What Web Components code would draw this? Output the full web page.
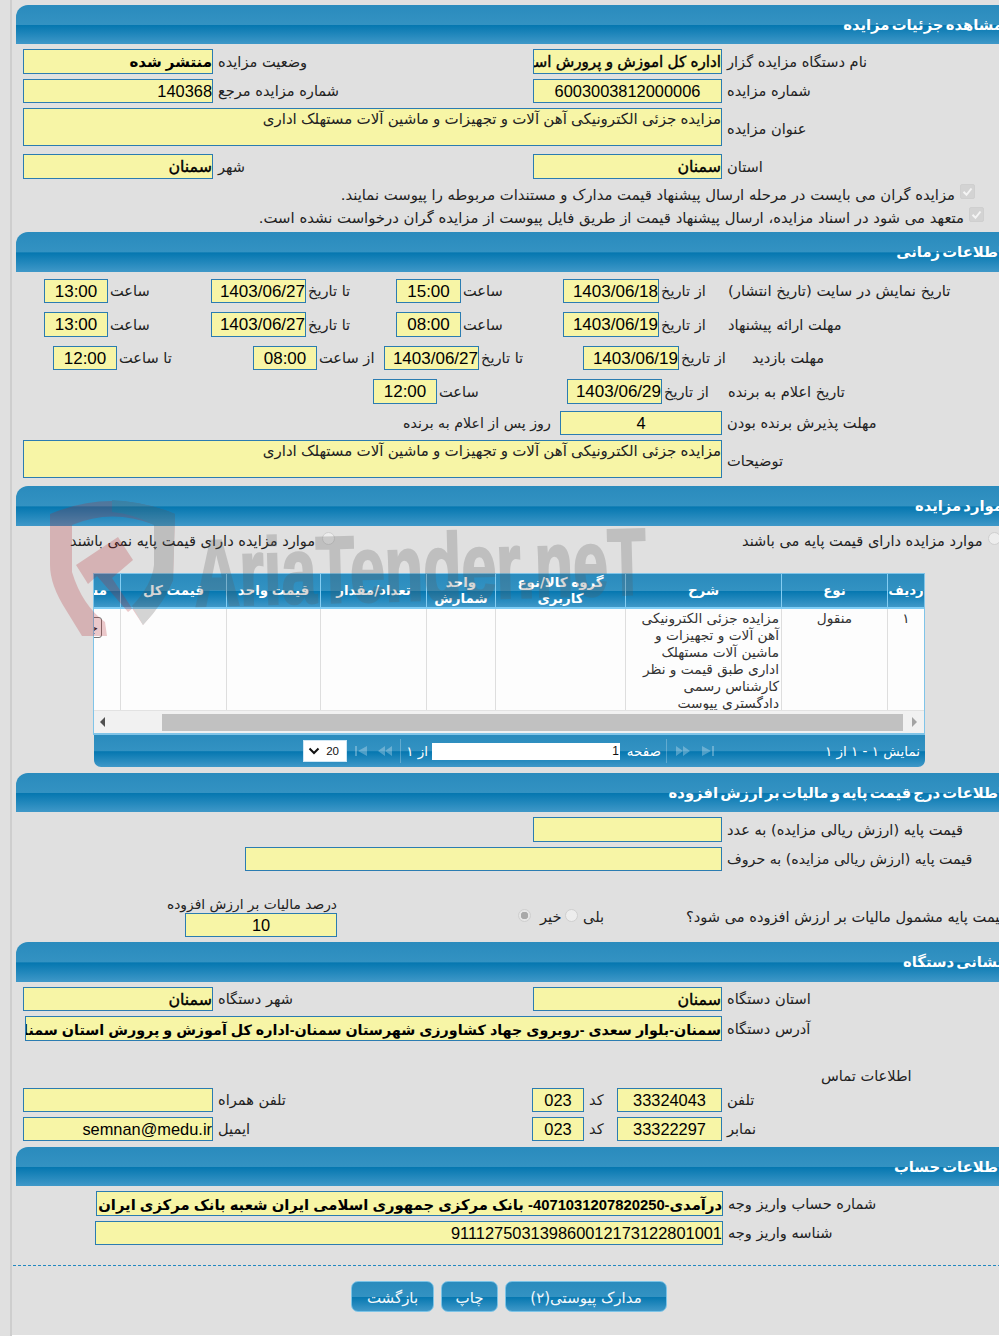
<!DOCTYPE html>
<html>
<head>
<meta charset="utf-8">
<title>مشاهده جزئیات مزایده</title>
<style>
html,body{margin:0;padding:0;height:1336px;overflow:hidden;background:#e0e0e0}
body{font:14px "Liberation Sans","DejaVu Sans",sans-serif;color:#111}
</style>
</head>
<body>
<tender-page>
  <f-section title="مشاهده جزئیات مزایده" style="margin-top:5px;--hh:39px">
    <f-row h="25" mt="5" pad="7">
      <f-field w="190" bold style="font-size:15px;line-height:23px">منتشر شده</f-field><f-label w="320">وضعیت مزایده</f-label>
      <f-field w="189" faux style="font-size:15.2px">اداره کل اموزش و پرورش استان سمنان</f-field><f-label>نام دستگاه مزایده گزار</f-label>
    </f-row>
    <f-row h="24" mt="5" pad="7">
      <f-field w="190">140368</f-field><f-label w="320">شماره مزایده مرجع</f-label>
      <f-field w="189" center>6003003812000006</f-field><f-label>شماره مزایده</f-label>
    </f-row>
    <f-row h="38" mt="5" pad="7">
      <f-field w="699" area>مزایده جزئی الکترونیکی آهن آلات و تجهیزات و ماشین آلات مستهلک اداری</f-field><f-label style="margin-top:4px">عنوان مزایده</f-label>
    </f-row>
    <f-row h="25" mt="8" pad="7">
      <f-field w="190" faux>سمنان</f-field><f-label w="320">شهر</f-label>
      <f-field w="189" faux>سمنان</f-field><f-label>استان</f-label>
    </f-row>
    <f-row h="22" mt="5" end="41">
      <f-label style="font-size:14.8px">مزایده گران می بایست در مرحله ارسال پیشنهاد قیمت مدارک و مستندات مربوطه را پیوست نمایند.</f-label><f-check></f-check>
    </f-row>
    <f-row h="22" mt="1" end="32">
      <f-label style="font-size:14.85px">متعهد می شود در اسناد مزایده، ارسال پیشنهاد قیمت از طریق فایل پیوست از مزایده گران درخواست نشده است.</f-label><f-check></f-check>
    </f-row>
  </f-section>

  <f-section title="اطلاعات زمانی" style="margin-top:3px;--hh:40px">
    <f-row h="24" mt="7" pad="28">
      <f-field w="64" center big>13:00</f-field><f-label w="103" tight>ساعت</f-label>
      <f-field w="95" ltr big>1403/06/27</f-field><f-label w="90" tight>تا تاریخ</f-label>
      <f-field w="65" center big>15:00</f-field><f-label w="102" tight>ساعت</f-label>
      <f-field w="96" ltr big>1403/06/18</f-field><f-label w="69" tight>از تاریخ</f-label>
      <f-label flush style="font-size:14.9px">تاریخ نمایش در سایت (تاریخ انتشار)</f-label>
    </f-row>
    <f-row h="25" mt="9" pad="28">
      <f-field w="64" center big>13:00</f-field><f-label w="103" tight>ساعت</f-label>
      <f-field w="95" ltr big>1403/06/27</f-field><f-label w="90" tight>تا تاریخ</f-label>
      <f-field w="65" center big>08:00</f-field><f-label w="102" tight>ساعت</f-label>
      <f-field w="96" ltr big>1403/06/19</f-field><f-label w="69" tight>از تاریخ</f-label>
      <f-label flush>مهلت ارائه پیشنهاد</f-label>
    </f-row>
    <f-row h="24" mt="9" pad="37">
      <f-field w="64" center big>12:00</f-field><f-label w="136" tight>تا ساعت</f-label>
      <f-field w="64" center big>08:00</f-field><f-label w="67" tight>از ساعت</f-label>
      <f-field w="95" ltr big>1403/06/27</f-field><f-label w="104" tight>تا تاریخ</f-label>
      <f-field w="96" ltr big>1403/06/19</f-field><f-label w="73" tight>از تاریخ</f-label>
      <f-label flush>مهلت بازدید</f-label>
    </f-row>
    <f-row h="25" mt="9" pad="357">
      <f-field w="64" center big>12:00</f-field><f-label w="130" tight>ساعت</f-label>
      <f-field w="95" ltr big>1403/06/29</f-field><f-label w="66" tight>از تاریخ</f-label>
      <f-label flush>تاریخ اعلام به برنده</f-label>
    </f-row>
    <f-row h="24" mt="7" pad="387">
      <f-label w="157" flush style="font-size:14.2px">روز پس از اعلام به برنده</f-label>
      <f-field w="162" center>4</f-field><f-label>مهلت پذیرش برنده بودن</f-label>
    </f-row>
    <f-row h="38" mt="5" pad="7">
      <f-field w="699" area>مزایده جزئی الکترونیکی آهن آلات و تجهیزات و ماشین آلات مستهلک اداری</f-field><f-label style="margin-top:4px">توضیحات</f-label>
    </f-row>
  </f-section>

  <f-section title="موارد مزایده" style="margin-top:8px;--hh:40px">
    <f-row h="24" mt="3" pad="54">
      <f-label w="249" flush>موارد مزایده دارای قیمت پایه نمی باشند</f-label><f-radio style="margin-top:-6px"></f-radio>
      <f-label w="407" flush></f-label>
      <f-label w="243" flush>موارد مزایده دارای قیمت پایه می باشند</f-label><f-radio style="margin-top:-6px"></f-radio>
    </f-row>
    <tender-grid></tender-grid>
  </f-section>

  <f-section title="اطلاعات درج قیمت پایه و مالیات بر ارزش افزوده" style="margin-top:6px;--hh:39px">
    <f-row h="25" mt="5" pad="517">
      <f-field w="189"></f-field><f-label>قیمت پایه (ارزش ریالی مزایده) به عدد</f-label>
    </f-row>
    <f-row h="24" mt="5" pad="229">
      <f-field w="477"></f-field><f-label style="font-size:14.2px">قیمت پایه (ارزش ریالی مزایده) به حروف</f-label>
    </f-row>
    <f-row h="40" mt="26" pad="169" align="end">
      <f-stack w="152"><f-label flush style="font-size:13.8px">درصد مالیات بر ارزش افزوده</f-label><f-field w="152" h="24" center>10</f-field></f-stack>
      <f-label w="178" flush></f-label>
      <f-radio checked style="margin-bottom:15px"></f-radio><f-label w="31" style="margin-bottom:11px;padding-left:9px">خیر</f-label>
      <f-radio style="margin-bottom:15px"></f-radio><f-label w="108" style="margin-bottom:11px">بلی</f-label>
      <f-label flush style="margin-bottom:11px">قیمت پایه مشمول مالیات بر ارزش افزوده می شود؟</f-label>
    </f-row>
  </f-section>

  <f-section title="نشانی دستگاه" style="margin-top:5px;--hh:40px">
    <f-row h="24" mt="5" pad="7">
      <f-field w="190" faux>سمنان</f-field><f-label w="320">شهر دستگاه</f-label>
      <f-field w="189" faux>سمنان</f-field><f-label>استان دستگاه</f-label>
    </f-row>
    <f-row h="25" mt="5" pad="9">
      <f-field w="697" bold>سمنان-بلوار سعدی -روبروی جهاد کشاورزی شهرستان سمنان-اداره کل آموزش و پرورش استان سمنان</f-field><f-label>آدرس دستگاه</f-label>
    </f-row>
    <f-row h="21" mt="24" pad="805">
      <f-label flush>اطلاعات تماس</f-label>
    </f-row>
    <f-row h="24" mt="2" pad="7">
      <f-field w="190"></f-field><f-label w="319">تلفن همراه</f-label>
      <f-field w="52" center>023</f-field><f-label w="33">کد</f-label>
      <f-field w="105" center>33324043</f-field><f-label>تلفن</f-label>
    </f-row>
    <f-row h="24" mt="5" pad="7">
      <f-field w="190" ltr>semnan@medu.ir</f-field><f-label w="319">ایمیل</f-label>
      <f-field w="52" center>023</f-field><f-label w="33">کد</f-label>
      <f-field w="105" center>33322297</f-field><f-label>نمابر</f-label>
    </f-row>
  </f-section>

  <f-section title="اطلاعات حساب" style="margin-top:6px;--hh:39px">
    <f-row h="25" mt="5" pad="80">
      <f-field w="627" bold style="font-size:14.8px">درآمدی-4071031207820250- بانک مرکزی جمهوری اسلامی ایران شعبه بانک مرکزی ایران</f-field><f-label>شماره حساب واریز وجه</f-label>
    </f-row>
    <f-row h="24" mt="5" pad="79">
      <f-field w="628">911127503139860012173122801001</f-field><f-label>شناسه واریز وجه</f-label>
    </f-row>
  </f-section>

  <f-actions>
    <f-button w="83">بازگشت</f-button>
    <f-button w="57">چاپ</f-button>
    <f-button w="162">مدارک پیوستی(۲)</f-button>
  </f-actions>

  <aria-watermark></aria-watermark>
</tender-page>

<script>
const FIELD_BORDER = '#2b7cb1';

class TenderPage extends HTMLElement{
    constructor(){
        super();
        this.attachShadow({mode: 'open'});
        this.shadowRoot.innerHTML = `
        <style>
            :host{
                display: block;
                position: relative;
                box-sizing: border-box;
                margin-left: 10px;
                width: 1008px;
                height: 1336px;
                padding-left: 4px;
                border-left: 2px solid #cecece;
                overflow: hidden;
            }
            .end{position: absolute; left: 0; right: 0; bottom: 0; height: 1px; background: #fff}
        </style>
        <slot></slot>
        <div class="end"></div>`;
    }
}
customElements.define('tender-page', TenderPage);

class FSection extends HTMLElement{
    constructor(){
        super();
        this.attachShadow({mode: 'open'});
    }
    connectedCallback(){
        this.shadowRoot.innerHTML = `
        <style>
            :host{display: block; width: 1000px}
            header{
                box-sizing: border-box;
                height: var(--hh, 39px);
                padding: 11px 13px 0 0;
                border-top-left-radius: 12px;
                border-top-right-radius: 12px;
                background: linear-gradient(#2a8bbd 0, #3392c2 50%, #0577b0 52%, #3f98c8 100%);
                color: #fff;
                font: bold 14.8px "DejaVu Sans", sans-serif;
                word-spacing: -3px;
                direction: rtl;
                white-space: nowrap;
            }
        </style>
        <header>${this.getAttribute('title')}</header>
        <slot></slot>`;
        this.removeAttribute('title');
    }
}
customElements.define('f-section', FSection);

class FRow extends HTMLElement{
    constructor(){
        super();
        this.attachShadow({mode: 'open'});
        this.shadowRoot.innerHTML = `
        <style>
            :host{display: flex; align-items: center; box-sizing: border-box}
        </style>
        <slot></slot>`;
    }
    connectedCallback(){
        const a = n => this.getAttribute(n);
        if(a('h')) this.style.height = a('h') + 'px';
        if(a('mt')) this.style.marginTop = a('mt') + 'px';
        if(a('pad')) this.style.paddingLeft = a('pad') + 'px';
        if(a('end')){
            this.style.justifyContent = 'flex-end';
            this.style.paddingRight = a('end') + 'px';
        }
        if(a('align')) this.style.alignItems = a('align') == 'end' ? 'flex-end' : a('align');
    }
}
customElements.define('f-row', FRow);

class FField extends HTMLElement{
    constructor(){
        super();
        this.attachShadow({mode: 'open'});
        this.shadowRoot.innerHTML = `
        <style>
            :host{
                display: block;
                flex: none;
                align-self: stretch;
                box-sizing: border-box;
                border: 1px solid ${FIELD_BORDER};
                background: #f7f5a6;
                color: #000;
                font: 16.4px/23px "Liberation Sans", "DejaVu Sans", sans-serif;
                direction: rtl;
                text-align: right;
                white-space: nowrap;
                overflow: hidden;
            }
            :host([center]){text-align: center}
            :host([ltr]){direction: ltr; text-align: right}
            :host([big]){font-size: 17px}
            :host([bold]){font-size: 14.3px; line-height: 26px; font-weight: bold}
            :host([faux]){font-size: 15.8px; -webkit-text-stroke: .4px #000}
            :host([area]){white-space: normal; font-size: 15.05px; line-height: 19px; color: #222}
        </style>
        <slot></slot>`;
    }
    connectedCallback(){
        if(this.hasAttribute('w')) this.style.width = this.getAttribute('w') + 'px';
        if(this.hasAttribute('h')) this.style.height = this.getAttribute('h') + 'px';
    }
}
customElements.define('f-field', FField);

class FLabel extends HTMLElement{
    constructor(){
        super();
        this.attachShadow({mode: 'open'});
        this.shadowRoot.innerHTML = `
        <style>
            :host{
                display: block;
                flex: none;
                box-sizing: border-box;
                padding-left: 5px;
                color: #222;
                font: 14.6px/18px "DejaVu Sans", sans-serif;
                direction: rtl;
                text-align: left;
                white-space: nowrap;
            }
            :host([flush]){padding-left: 0}
            :host([tight]){padding-left: 2px}
        </style>
        <slot></slot>`;
    }
    connectedCallback(){
        if(this.hasAttribute('w')) this.style.width = this.getAttribute('w') + 'px';
    }
}
customElements.define('f-label', FLabel);

class FStack extends HTMLElement{
    constructor(){
        super();
        this.attachShadow({mode: 'open'});
        this.shadowRoot.innerHTML = `
        <style>
            :host{display: flex; flex: none; flex-direction: column; align-items: flex-end}
        </style>
        <slot></slot>`;
    }
    connectedCallback(){
        this.style.width = this.getAttribute('w') + 'px';
    }
}
customElements.define('f-stack', FStack);

class FCheck extends HTMLElement{
    constructor(){
        super();
        this.attachShadow({mode: 'open'});
        this.shadowRoot.innerHTML = `
        <style>
            :host{display: block; flex: none; align-self: flex-start; margin-left: 5px; width: 15px; height: 15px}
            div{
                box-sizing: border-box; width: 15px; height: 15px;
                background: #d3d3d3; border: 1px solid #cfcfcf; border-radius: 2px;
            }
            svg{display: block}
        </style>
        <div><svg width="13" height="13" viewBox="0 0 13 13"><path d="M2.5 6.8l3 3 5-6.3" fill="none" stroke="#f4f4f4" stroke-width="2"/></svg></div>`;
    }
}
customElements.define('f-check', FCheck);

class FRadio extends HTMLElement{
    constructor(){
        super();
        this.attachShadow({mode: 'open'});
    }
    connectedCallback(){
        const checked = this.hasAttribute('checked');
        this.shadowRoot.innerHTML = `
        <style>
            :host{display: block; flex: none; width: 13px; height: 13px; margin-left: 3px}
            div{
                box-sizing: border-box; width: 13px; height: 13px; border-radius: 50%;
                border: 1px solid #cfcfcf; background: ${checked ? 'radial-gradient(circle, #a9a9a9 0 3.5px, #e6e6e6 4px)' : '#ededed'};
            }
        </style>
        <div></div>`;
    }
}
customElements.define('f-radio', FRadio);

class TenderGrid extends HTMLElement{
    constructor(){
        super();
        this.attachShadow({mode: 'open'});
        const heads = ['مشاهده', 'قیمت کل', 'قیمت واحد', 'تعداد/مقدار', 'واحد<br>شمارش', 'گروه کالا/نوع<br>کاربری', 'شرح', 'نوع', 'ردیف'];
        const bar = 'linear-gradient(#2a8bbd 0, #3392c2 50%, #0577b0 52%, #3f98c8 100%)';
        const pagerIcon = (d, x) => `<svg width="${x}" height="10" viewBox="0 0 ${x} 10"><path d="${d}" fill="#fff" opacity=".28"/></svg>`;
        this.shadowRoot.innerHTML = `
        <style>
            :host{
                display: block;
                margin: 20px 0 0 77px;
                width: 833px;
                font-family: "DejaVu Sans", sans-serif;
                direction: ltr;
            }
            .box{border: 1px solid #80c4e8; border-bottom-width: 2px; box-sizing: border-box; width: 832px}
            .cols{display: grid; grid-template-columns: 26px 106px 94px 106px 69px 130px 156px 106px 37px}
            .head{height: 33px; background: ${bar}; border-bottom: 2px solid #7fcdf5}
            .head div{
                display: flex; align-items: center; justify-content: center;
                box-sizing: border-box; border-left: 1px solid #84cdf2;
                color: #fff; font: bold 13.4px/16px "DejaVu Sans", sans-serif;
                word-spacing: -1px;
                direction: rtl; text-align: center; overflow: hidden; white-space: nowrap;
            }
            .head div:first-child{border-left: 0; justify-content: flex-start; padding-right: 13px}
            .body{height: 101px; background: #fdfdfd; border-bottom: 1px solid #e2e2e2}
            .body div{
                box-sizing: border-box; border-left: 1px solid #dedede; height: 101px;
                padding: 1px 2px 0; color: #333; font: 13.7px/17px "DejaVu Sans", sans-serif;
                direction: rtl; overflow: hidden;
            }
            .body div:first-child{border-left: 0; white-space: nowrap; padding: 8px 18px 0 0}
            .body .desc{padding-left: 8px}
            .body .mid{text-align: center}
            .body button{
                display: block; width: 60px; height: 21px; padding: 0 3px; margin: 0;
                border: 1px solid #777; border-radius: 3px; background: transparent;
                color: #222; font: 13px "DejaVu Sans", sans-serif; text-align: right;
            }
            .scroll{display: flex; align-items: center; height: 22px; background: #f1f1f1}
            .scroll svg{display: block; flex: none}
            .thumb{height: 17px; width: 741px; margin: 0 7px 0 51px; background: #c1c1c1}
            .pager{
                display: flex; align-items: center; box-sizing: border-box;
                height: 32px; margin: 0 0 0 1px; width: 831px; padding: 0 5px 0 209px;
                background: ${bar}; border-radius: 0 0 7px 7px;
                color: #fff; font: 13.5px "DejaVu Sans", sans-serif;
            }
            .pager span{white-space: nowrap; direction: rtl}
            .sel{
                display: flex; align-items: center; justify-content: space-between; box-sizing: border-box;
                width: 44px; height: 22px; padding: 0 7px 0 4px; background: #fff;
                border: 1px solid #cfe7f5; color: #111; font: 11.5px "Liberation Sans", sans-serif;
            }
            .sep{width: 1px; height: 24px; background: rgba(255,255,255,.25)}
            .page{
                width: 188px; height: 17px; box-sizing: border-box; background: #fff; color: #111;
                font: 12px/17px "Liberation Sans", sans-serif; text-align: right; padding-right: 1px;
            }
        </style>
        <div class="box">
            <div class="cols head">${heads.map(h => `<div>${h}</div>`).join('')}</div>
            <div class="cols body">
                <div><button tabindex="-1">جزئیات</button></div>
                <div></div><div></div><div></div><div></div><div></div>
                <div class="desc">مزایده جزئی الکترونیکی آهن آلات و تجهیزات و ماشین آلات مستهلک اداری طبق قیمت و نظر کارشناس رسمی دادگستری پیوست</div>
                <div class="mid">منقول</div>
                <div class="mid">۱</div>
            </div>
            <div class="scroll">
                <svg width="14" height="10" viewBox="0 0 14 10" style="margin-left:3px"><path d="M8 0v10L3 5z" fill="#505050"/></svg>
                <div class="thumb"></div>
                <svg width="10" height="10" viewBox="0 0 10 10"><path d="M2 0v10l5-5z" fill="#a3a3a3"/></svg>
            </div>
        </div>
        <div class="pager">
            <div class="sel"><svg width="12" height="8" viewBox="0 0 12 8"><path d="M1.5 1.5l4.5 4.5 4.5-4.5" fill="none" stroke="#111" stroke-width="2"/></svg><b style="font-weight:normal">20</b></div>
            <span style="width:8px"></span>
            ${pagerIcon('M0 0h2v10H0zM12 0v10L3 5z', 12)}
            <span style="width:11px"></span>
            ${pagerIcon('M7 0v10L0 5zM14 0v10L7 5z', 14)}
            <span style="width:8px"></span>
            <div class="sep"></div>
            <span style="width:6px"></span>
            <span style="width:21px">از ۱</span>
            <span style="width:4px"></span>
            <div class="page">1</div>
            <span style="width:5px"></span>
            <span style="width:36px">صفحه</span>
            <span style="width:5px"></span>
            <div class="sep"></div>
            <span style="width:9px"></span>
            ${pagerIcon('M0 0l7 5-7 5zM7 0l7 5-7 5z', 14)}
            <span style="width:12px"></span>
            ${pagerIcon('M0 0l9 5-9 5zM10 0h2v10h-2z', 12)}
            <span style="flex:1"></span>
            <span>نمایش ۱ - ۱ از ۱</span>
        </div>`;
    }
}
customElements.define('tender-grid', TenderGrid);

class FActions extends HTMLElement{
    constructor(){
        super();
        this.attachShadow({mode: 'open'});
        this.shadowRoot.innerHTML = `
        <style>
            :host{
                display: flex; gap: 7px;
                margin: 20px 0 0 -3px; padding: 15px 0 0 338px;
                width: 1003px; box-sizing: border-box;
                border-top: 1px dashed #2388c0;
            }
        </style>
        <slot></slot>`;
    }
}
customElements.define('f-actions', FActions);

class FButton extends HTMLElement{
    constructor(){
        super();
        this.attachShadow({mode: 'open'});
        this.shadowRoot.innerHTML = `
        <style>
            :host{
                display: flex; align-items: center; justify-content: center; flex: none;
                box-sizing: border-box; height: 31px; padding-top: 3px;
                border: 1px solid #7cc3e6; border-radius: 7px;
                background: linear-gradient(#2a8bbd 0, #3392c2 50%, #0577b0 52%, #3f98c8 100%);
                color: #f4f8fb; font: 15px "DejaVu Sans", sans-serif; direction: rtl; white-space: nowrap;
            }
        </style>
        <slot></slot>`;
    }
    connectedCallback(){
        this.style.width = this.getAttribute('w') + 'px';
    }
}
customElements.define('f-button', FButton);

class AriaWatermark extends HTMLElement{
    constructor(){
        super();
        this.attachShadow({mode: 'open'});
        this.shadowRoot.innerHTML = `
        <style>
            :host{position: absolute; left: -12px; top: 0; width: 700px; height: 700px; pointer-events: none}
            svg{position: absolute; left: 0; top: 0}
            text{font: bold 94px "Liberation Sans", sans-serif}
        </style>
        <svg width="700" height="700" viewBox="0 0 700 700">
            <g opacity=".24">
                <path d="M50 514Q112 488 175 514L173 580Q165 600 143 625L112 578 133 560 118 537 76 565 88 584 97 576 128 612 143 600 155 570 155 525Q112 508 72 525L72 572Q82 605 105 622L107 636 82 636 66 610Q50 585 50 565Z" fill="#b3262c"/>
                <path d="M112 500Q146 502 175 514L173 580Q165 602 143 625L132 606Q152 585 154 565L154 525Q134 514 112 512Z" fill="#555"/>
                <text x="195" y="600" textLength="452" lengthAdjust="spacingAndGlyphs" fill="#5a5a5a" stroke="#5a5a5a" stroke-width="2.5" transform="rotate(-1.5 420 600)">AriaTender.neT</text>
            </g>
        </svg>`;
    }
}
customElements.define('aria-watermark', AriaWatermark);
</script>
</body>
</html>
